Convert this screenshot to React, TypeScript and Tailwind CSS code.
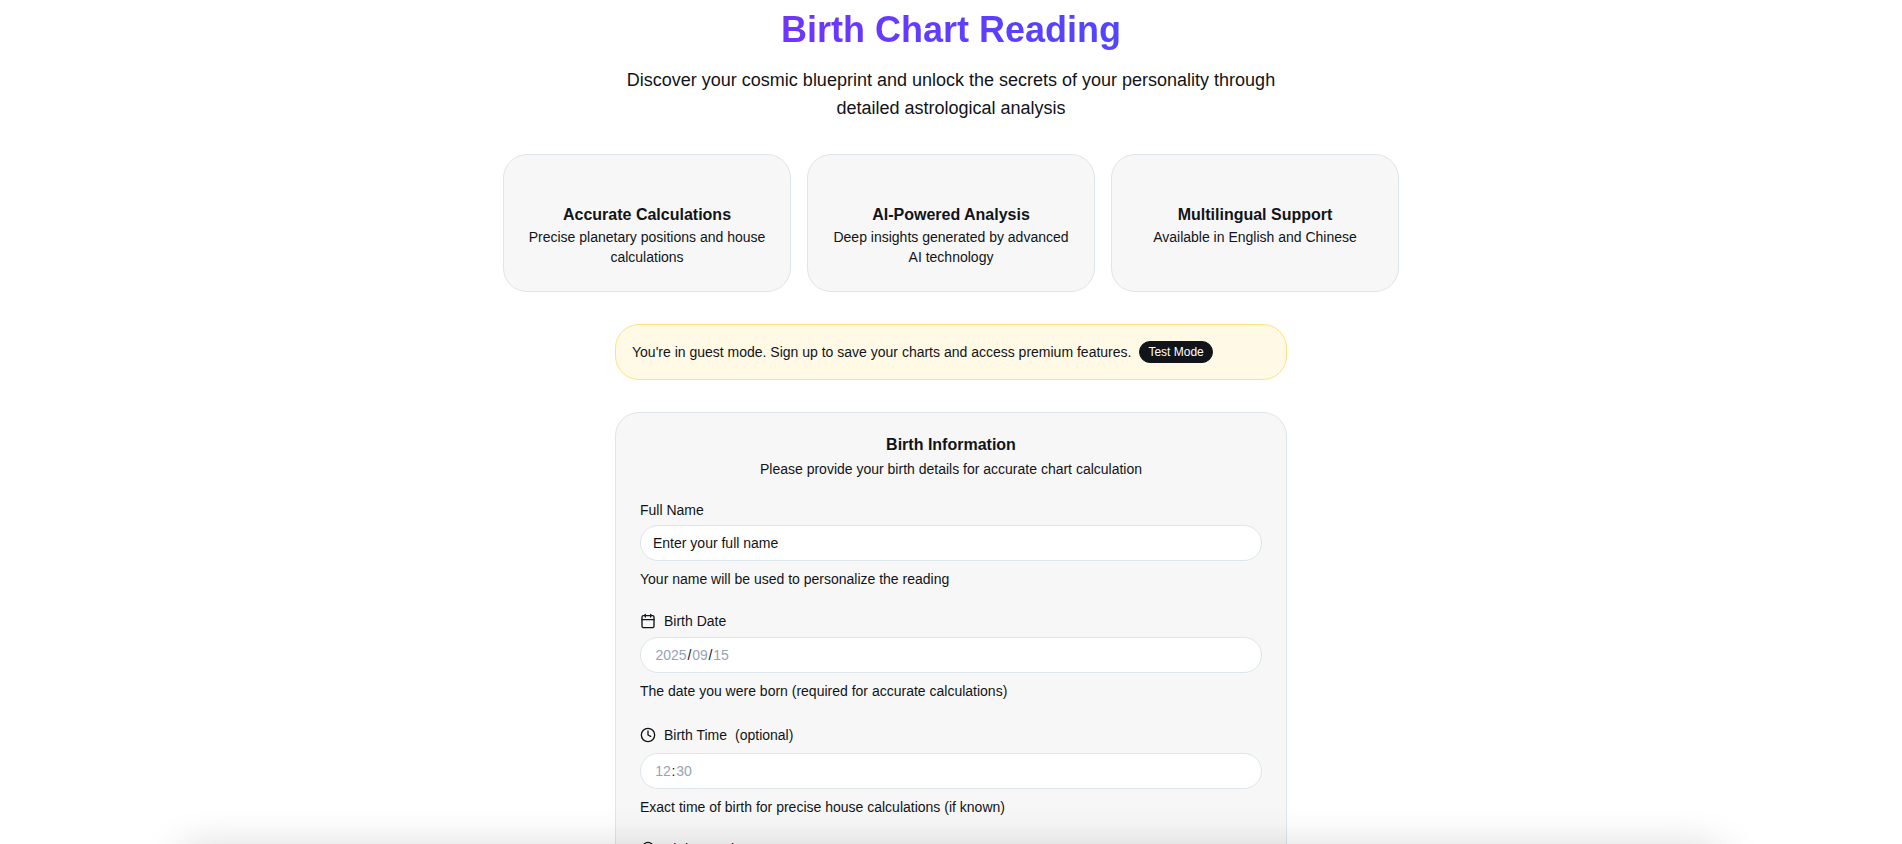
import { useState } from "react";
import type { ReactNode } from "react";
import { Calendar, Clock, MapPin } from "lucide-react";

interface Feature {
  title: string;
  description: string;
}

const features: Feature[] = [
  {
    title: "Accurate Calculations",
    description: "Precise planetary positions and house calculations",
  },
  {
    title: "AI-Powered Analysis",
    description: "Deep insights generated by advanced AI technology",
  },
  {
    title: "Multilingual Support",
    description: "Available in English and Chinese",
  },
];

interface FieldProps {
  label: ReactNode;
  htmlFor: string;
  hint: string;
  children: ReactNode;
}

function Field({ label, htmlFor, hint, children }: FieldProps) {
  return (
    <div className="flex flex-col gap-2">
      <label htmlFor={htmlFor} className="flex items-center gap-2 leading-none">
        {label}
      </label>
      {children}
      <p>{hint}</p>
    </div>
  );
}

interface SegmentProps {
  id: string;
  name: string;
  placeholder: string;
  wide?: boolean;
}

// one numeric part of a date or time box
function Segment({ id, name, placeholder, wide }: SegmentProps) {
  return (
    <input
      id={id}
      type="text"
      inputMode="numeric"
      aria-label={name}
      placeholder={placeholder}
      maxLength={placeholder.length}
      className={`bg-transparent text-center outline-none placeholder:text-[#94a3b8] ${
        wide ? "w-8" : "w-4"
      }`}
    />
  );
}

function SegmentBox({ children }: { children: ReactNode }) {
  return (
    <div className="flex h-9 items-center rounded-full border border-[#dce6eb] bg-white px-3.5">
      {children}
    </div>
  );
}

function Separator({ children }: { children: string }) {
  return <span className="w-[5px] text-center">{children}</span>;
}

export default function App() {
  const [fullName, setFullName] = useState("");

  return (
    <div className="relative h-screen overflow-hidden bg-white font-['Liberation_Sans',Arial,sans-serif] text-sm text-[#111418]">
      <main className="mx-auto max-w-4xl pt-2.5">
        <header className="mb-8 text-center">
          <h1 className="mb-4 bg-linear-to-r/srgb from-[#8727fd] to-[#3954fe] bg-clip-text text-4xl font-bold text-transparent">
            Birth Chart Reading
          </h1>
          <p className="mx-auto max-w-2xl text-lg">
            Discover your cosmic blueprint and unlock the secrets of your
            personality through detailed astrological analysis
          </p>
        </header>

        <section className="mb-8 grid grid-cols-3 gap-4">
          {features.map((feature) => (
            <div
              key={feature.title}
              className="rounded-3xl border border-[#dce6eb] bg-[#f7f7f7] px-6 pt-12 pb-6 text-center"
            >
              <h3 className="text-base font-bold">{feature.title}</h3>
              <p>{feature.description}</p>
            </div>
          ))}
        </section>

        <div className="mx-auto mb-8 flex max-w-2xl items-center gap-2 rounded-3xl border border-[#fde47d] bg-[#fff9e6] p-4">
          <p>
            You're in guest mode. Sign up to save your charts and access premium
            features.
          </p>
          <span className="rounded-full border border-[#111418] bg-[#111418] px-2 py-0.5 text-xs font-medium text-white">
            Test Mode
          </span>
        </div>

        <section className="mx-auto max-w-2xl rounded-3xl border border-[#dce6eb] bg-[#f7f7f7] p-6">
          <div className="mb-6 flex flex-col gap-1.5 text-center">
            <h2 className="text-base leading-none font-bold">
              Birth Information
            </h2>
            <p>Please provide your birth details for accurate chart calculation</p>
          </div>

          <form className="flex flex-col gap-6">
            <Field
              label="Full Name"
              htmlFor="full-name"
              hint="Your name will be used to personalize the reading"
            >
              <input
                id="full-name"
                type="text"
                value={fullName}
                onChange={(e) => setFullName(e.target.value)}
                placeholder="Enter your full name"
                className="h-9 w-full rounded-full border border-[#dce6eb] bg-white px-3 outline-none placeholder:text-[#111418]"
              />
            </Field>

            <Field
              label={
                <>
                  <Calendar size={16} />
                  Birth Date
                </>
              }
              htmlFor="birth-year"
              hint="The date you were born (required for accurate calculations)"
            >
              <SegmentBox>
                <Segment id="birth-year" name="Year" placeholder="2025" wide />
                <Separator>/</Separator>
                <Segment id="birth-month" name="Month" placeholder="09" />
                <Separator>/</Separator>
                <Segment id="birth-day" name="Day" placeholder="15" />
              </SegmentBox>
            </Field>

            <Field
              label={
                <>
                  <Clock size={16} />
                  Birth Time
                  <span className="leading-5">(optional)</span>
                </>
              }
              htmlFor="birth-hour"
              hint="Exact time of birth for precise house calculations (if known)"
            >
              <SegmentBox>
                <Segment id="birth-hour" name="Hour" placeholder="12" />
                <Separator>:</Separator>
                <Segment id="birth-minute" name="Minute" placeholder="30" />
              </SegmentBox>
            </Field>

            <Field
              label={
                <>
                  <MapPin size={16} />
                  Birth Location
                </>
              }
              htmlFor="birth-location"
              hint="City and country where you were born"
            >
              <input
                id="birth-location"
                type="text"
                className="h-9 w-full rounded-full border border-[#dce6eb] bg-white px-3 outline-none"
              />
            </Field>
          </form>
        </section>
      </main>

      {/* collapsed bottom sheet, only its shadow reaches the page */}
      <div className="pointer-events-none absolute inset-x-44 top-full h-40 rounded-3xl shadow-[0_2px_40px_rgba(0,0,0,0.15)]" />
    </div>
  );
}
